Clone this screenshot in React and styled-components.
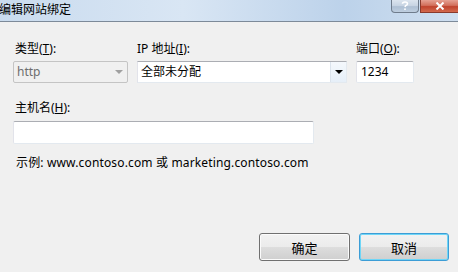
import React from "react";
import styled, { createGlobalStyle } from "styled-components";

const Global = createGlobalStyle`
  html, body { margin: 0; padding: 0; background: #f0f0f0; }
  body { font-family: "Noto Sans", "Noto Sans CJK SC", sans-serif; font-size: 12px; color: #000; }
  * { box-sizing: border-box; }
`;

const Window = styled.div`
  width: 458px;
  height: 272px;
  display: flex;
  flex-direction: column;
  background: #f0f0f0;
  overflow: hidden;
`;

const TitleBar = styled.div`
  height: 22px;
  flex: none;
  display: flex;
  align-items: flex-start;
  justify-content: space-between;
  background: linear-gradient(90deg, #c9dbee 0%, #d9e6f4 40%, #bcd2ea 75%, #cfdff0 100%);
  border-bottom: 1px solid #7d8a99;
`;

const Title = styled.div`
  font-family: "Noto Sans CJK SC", sans-serif;
  font-size: 12px;
  line-height: 16px;
  padding-top: 1px;
  margin-left: -1px;
  color: #000;
`;

const Caption = styled.div`
  display: flex;
  gap: 1px;
`;

const CapButton = styled.div`
  width: ${(p) => p.$w}px;
  height: 13px;
  display: flex;
  align-items: center;
  justify-content: center;
  border: 1px solid ${(p) => (p.$close ? "#8a3a2c" : "#6f7c8c")};
  border-top: none;
  border-right: ${(p) => (p.$close ? "none" : "1px solid #6f7c8c")};
  border-radius: ${(p) => (p.$close ? "0" : "0 0 4px 4px")};
  background: ${(p) =>
    p.$close
      ? "linear-gradient(180deg, #e6a193 0%, #d2705c 45%, #c0432d 55%, #d36a4e 100%)"
      : "linear-gradient(180deg, #dbe4ee 0%, #c6d3e2 50%, #aebfd3 55%, #bfcfe0 100%)"};
  color: #fff;
`;

const Body = styled.div`
  flex: 1;
  display: flex;
  flex-direction: column;
  padding: 18px 9px 11px 13px;
`;

const Row = styled.div`
  display: grid;
  grid-template-columns: 115px 210px 58px;
  column-gap: 9px;
`;

const Field = styled.div`
  display: flex;
  flex-direction: column;
`;

const Label = styled.div`
  font-family: "Noto Sans", "Noto Sans CJK SC", sans-serif;
  font-size: 12px;
  line-height: 18px;
  height: 18px;
  margin-bottom: 3px;
  padding-left: ${(p) => p.$indent || 0}px;
  white-space: nowrap;
  u { text-decoration: underline; text-underline-offset: 1px; }
`;

const Combo = styled.div`
  height: 22px;
  display: flex;
  align-items: stretch;
  border: 1px solid;
  border-color: ${(p) => (p.$disabled ? "#c4c4c4" : "#abadb3 #e3e9ef #e3e9ef #e2e3ea")};
  border-radius: ${(p) => (p.$disabled ? "2px" : "0")};
  background: ${(p) => (p.$disabled ? "#f0f0f0" : "#fff")};
  color: ${(p) => (p.$disabled ? "#6d6d6d" : "#000")};
`;

const ComboText = styled.div`
  flex: 1;
  padding-left: 3px;
  line-height: 20px;
  font-size: 12px;
  white-space: nowrap;
`;

const ArrowBox = styled.div`
  width: 16px;
  display: flex;
  align-items: center;
  justify-content: center;
  border-left: ${(p) => (p.$plain ? "none" : "1px solid #dbe3ec")};
  background: ${(p) => (p.$plain ? "transparent" : "linear-gradient(180deg, #f4f8fc, #e6eff8)")};
`;

const Arrow = styled.div`
  width: 0;
  height: 0;
  border-left: 4px solid transparent;
  border-right: 4px solid transparent;
  border-top: 4px solid ${(p) => p.$color};
`;

const TextBox = styled.div`
  height: ${(p) => p.$h || 22}px;
  width: ${(p) => (p.$w ? `${p.$w}px` : "auto")};
  border: 1px solid;
  border-color: #abadb3 #e3e9ef #e3e9ef #e2e3ea;
  border-radius: 2px;
  background: #fff;
  padding-left: 4px;
  line-height: 20px;
  font-size: 12px;
`;

const HostLabel = styled(Label)`
  margin-top: 16px;
  margin-bottom: 4px;
`;

const Example = styled.div`
  margin-top: 10px;
  padding-left: 3px;
  font-size: 12px;
  line-height: 18px;
  letter-spacing: 0.15px;
  white-space: nowrap;
`;

const Buttons = styled.div`
  margin-top: auto;
  display: flex;
  justify-content: flex-end;
  gap: 9px;
`;

const Button = styled.div`
  width: ${(p) => p.$w}px;
  height: 28px;
  display: flex;
  align-items: center;
  justify-content: center;
  border: 1px solid ${(p) => (p.$focus ? "#3c9dd6" : "#707070")};
  border-radius: 3px;
  box-shadow: inset 0 0 0 1px ${(p) => (p.$focus ? "#6fd6f7" : "#fbfbfb")};
  background: linear-gradient(180deg, #f2f2f2 0%, #ebebeb 50%, #dddddd 51%, #cfcfcf 100%);
  font-family: "Noto Sans CJK SC", sans-serif;
  font-size: 13px;
  color: #000;
`;

export default function App() {
  return (
    <>
      <Global />
      <Window>
        <TitleBar>
          <Title>编辑网站绑定</Title>
          <Caption>
            <CapButton $w={28}>
              <svg width="8" height="10" viewBox="0 0 8 10">
                <path d="M1.5 2.8 Q1.5 1 4 1 Q6.5 1 6.5 2.8 Q6.5 4 4.5 4.8 L4 6" fill="none" stroke="#fff" strokeWidth="1.6" />
                <rect x="3.2" y="7.4" width="1.6" height="1.6" fill="#fff" />
              </svg>
            </CapButton>
            <CapButton $w={38} $close>
              <svg width="10" height="8" viewBox="0 0 10 8">
                <path d="M1.5 0.5 L8.5 7.5 M8.5 0.5 L1.5 7.5" stroke="#fff" strokeWidth="2" />
              </svg>
            </CapButton>
          </Caption>
        </TitleBar>
        <Body>
          <Row>
            <Field>
              <Label $indent={2}>类型(<u>T</u>):</Label>
              <Combo $disabled>
                <ComboText>http</ComboText>
                <ArrowBox $plain>
                  <Arrow $color="#a0a0a0" />
                </ArrowBox>
              </Combo>
            </Field>
            <Field>
              <Label>IP 地址(<u>I</u>):</Label>
              <Combo>
                <ComboText>全部未分配</ComboText>
                <ArrowBox>
                  <Arrow $color="#000" />
                </ArrowBox>
              </Combo>
            </Field>
            <Field>
              <Label>端口(<u>O</u>):</Label>
              <TextBox>1234</TextBox>
            </Field>
          </Row>
          <HostLabel $indent={2}>主机名(<u>H</u>):</HostLabel>
          <TextBox $w={301} $h={23} />
          <Example>示例: www.contoso.com 或 marketing.contoso.com</Example>
          <Buttons>
            <Button $w={91}>确定</Button>
            <Button $w={90} $focus>取消</Button>
          </Buttons>
        </Body>
      </Window>
    </>
  );
}
